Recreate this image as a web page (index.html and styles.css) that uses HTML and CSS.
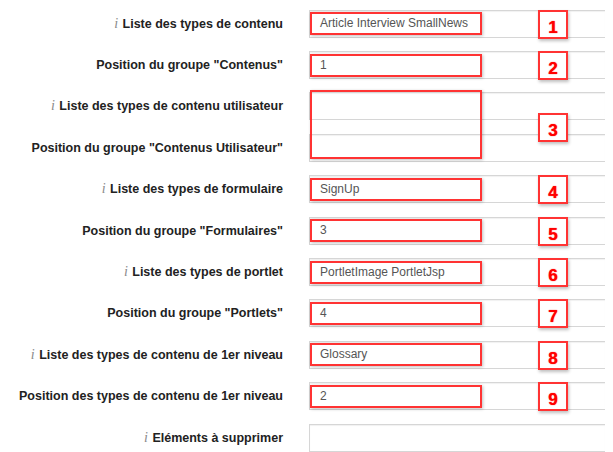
FILE: index.html
```html
<!DOCTYPE html>
<html lang="fr">
<head>
    <meta charset="UTF-8">
    <title>Paramètres des types de contenu</title>
    <link rel="stylesheet" href="styles.css">
</head>
<body>

    <div class="form">
        <div class="row">
            <label><i class="info">i</i> Liste des types de contenu</label>
            <div class="field"><span class="mark">Article Interview SmallNews</span></div>
            <span class="num">1</span>
        </div>
        <div class="row">
            <label>Position du groupe "Contenus"</label>
            <div class="field"><span class="mark">1</span></div>
            <span class="num">2</span>
        </div>

        <div class="group">
            <div class="row">
                <label><i class="info">i</i> Liste des types de contenu utilisateur</label>
                <div class="field"></div>
            </div>
            <div class="row">
                <label>Position du groupe "Contenus Utilisateur"</label>
                <div class="field"></div>
            </div>
            <span class="mark big"></span>
            <span class="num">3</span>
        </div>

        <div class="row">
            <label><i class="info">i</i> Liste des types de formulaire</label>
            <div class="field"><span class="mark">SignUp</span></div>
            <span class="num">4</span>
        </div>
        <div class="row">
            <label>Position du groupe "Formulaires"</label>
            <div class="field"><span class="mark">3</span></div>
            <span class="num">5</span>
        </div>
        <div class="row">
            <label><i class="info">i</i> Liste des types de portlet</label>
            <div class="field"><span class="mark">PortletImage PortletJsp</span></div>
            <span class="num">6</span>
        </div>
        <div class="row">
            <label>Position du groupe "Portlets"</label>
            <div class="field"><span class="mark">4</span></div>
            <span class="num">7</span>
        </div>
        <div class="row">
            <label><i class="info">i</i> Liste des types de contenu de 1er niveau</label>
            <div class="field"><span class="mark">Glossary</span></div>
            <span class="num">8</span>
        </div>
        <div class="row">
            <label>Position des types de contenu de 1er niveau</label>
            <div class="field"><span class="mark">2</span></div>
            <span class="num">9</span>
        </div>
        <div class="row">
            <label><i class="info">i</i> Eléments à supprimer</label>
            <div class="field"></div>
        </div>
    </div>

</body>
</html>
```

FILE: styles.css
```css
* {
    box-sizing: border-box;
}
body {
    margin: 0;
    background: white;
    font-family: "Liberation Sans", Arial, sans-serif;
    overflow: hidden;
}
.form {
    width: 613px;
    padding-top: 3px;
}
.group {
    position: relative;
}
.row {
    position: relative;
    display: flex;
    align-items: center;
    height: 41.4px;
}
label {
    width: 283px;
    text-align: right;
    font-size: 12.5px;
    font-weight: bold;
    color: #222;
    white-space: nowrap;
}
.info {
    font-family: "Liberation Serif", serif;
    font-weight: normal;
    color: #8a8a8a;
    font-size: 14px;
    margin-right: 1px;
}
.field {
    margin-left: 26px;
    width: 296px;
    height: 28px;
    border: 1px solid #d6d6d6;
    border-right: none;
    box-shadow: inset 0 1px 1px rgba(0, 0, 0, 0.06);
    display: flex;
    align-items: center;
}
.mark {
    width: 172px;
    height: 23px;
    border: 2px solid #f33;
    box-shadow: 1px 1px 3px rgba(0, 0, 0, 0.25);
    padding-left: 8px;
    font-size: 12px;
    line-height: 19px;
    color: #555;
    white-space: nowrap;
}
.mark.big {
    position: absolute;
    left: 310px;
    top: 4px;
    height: 69px;
    padding: 0;
}
.num {
    position: absolute;
    left: 538px;
    top: 50%;
    margin-top: -14px;
    width: 30px;
    height: 29px;
    border: 2px solid #f33;
    box-shadow: 1px 2px 3px rgba(0, 0, 0, 0.25);
    background: white;
    color: #f00;
    font-size: 17px;
    font-weight: bold;
    text-align: center;
    line-height: 31px;
    text-shadow: 0 0 1px #f00;
}
```
